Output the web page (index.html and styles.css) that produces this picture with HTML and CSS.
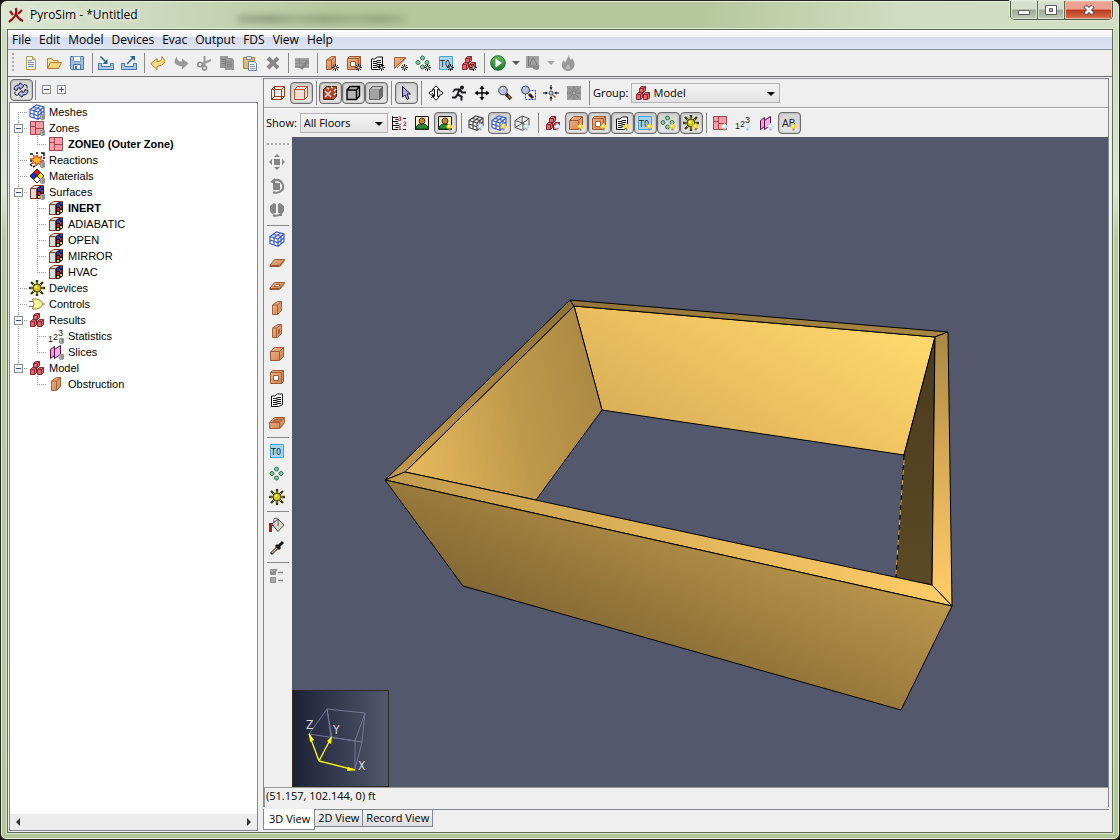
FILE: index.html
```html
<!DOCTYPE html>
<html lang="en">
<head>
<meta charset="utf-8">
<title>PyroSim - *Untitled</title>
<link rel="stylesheet" href="styles.css">
</head>
<body>
<svg class="sprite" aria-hidden="true">
  <defs>
    <linearGradient id="gOr" x1="0" y1="0" x2="1" y2="1"><stop offset="0" stop-color="#f0b68c"/><stop offset="1" stop-color="#cc7f4e"/></linearGradient>
    <linearGradient id="gGreen" x1="0" y1="0" x2="0" y2="1"><stop offset="0" stop-color="#6cba5c"/><stop offset="1" stop-color="#1d7a2c"/></linearGradient>
  </defs>
  <symbol id="lamp" viewBox="0 0 16 16"><path d="M12.500 8l3.500 3.500-1.500 2h-4l-1.500-2z" fill="#ffd23a"/><path d="M11 10h2v2h-2z" fill="#fff7b0"/><path d="M11.500 13.500h2v2h-2z" fill="#9a8a50"/></symbol>
  <symbol id="lampoff" viewBox="0 0 16 16"><path d="M12.500 8l3.500 3.500-1.500 2h-4l-1.500-2z" fill="#c4e6f2"/><path d="M11 10h2v2h-2z" fill="#fff"/><path d="M11.500 13.500h2v2h-2z" fill="#9fb4bd"/></symbol>
  <symbol id="knob" viewBox="0 0 16 16"><path d="M11 10.500q2.500-1.500 5 0v4.500q-2.500 2-5 0z" fill="#929292"/><path d="M12.500 11v4" stroke="#bbb"/></symbol>
  <symbol id="star" viewBox="0 0 16 16"><path d="M12.500 9v7M9 12.500h7M10 10l5 5M15 10l-5 5" stroke="#111" stroke-width="1"/><path d="M11.500 11.500h2v2h-2z" fill="#f4f4f4"/></symbol>

  <symbol id="new" viewBox="0 0 16 16"><path d="M3.500 1.500h6l3 3v10h-9z" fill="#fffdf0" stroke="#b39a4e"/><path d="M9.500 1.500v3h3" fill="#f1d98c" stroke="#b39a4e"/><path d="M5 5.500h4M5 7.500h6M5 9.500h6M5 11.500h6" stroke="#6d8fc0"/></symbol>
  <symbol id="open" viewBox="0 0 16 16"><path d="M1.500 13.500v-10h4l1.500 2h5v2" fill="#fde9a9" stroke="#b8792e"/><path d="M1.500 13.500l3-6h11l-3 6z" fill="#fbd57c" stroke="#b8792e"/></symbol>
  <symbol id="save" viewBox="0 0 16 16"><path d="M1.500 1.500h13v13h-12l-1-1z" fill="#9dbde0" stroke="#557aa8"/><path d="M4.500 1.500h7v5h-7z" fill="#f5f8ee" stroke="#7b98bd"/><path d="M4.500 9.500h7v5h-7z" fill="#dfeaf4" stroke="#4b6e9b"/><path d="M6 11h2v3h-2z" fill="#4b6e9b"/></symbol>
  <symbol id="import" viewBox="0 0 16 16"><path d="M.5 8.500h3v3h9v-3h3v6h-15z" fill="#a9c7e4" stroke="#4277a8"/><path d="M2.500 1.500l6 6" stroke="#20689a" stroke-width="1.500"/><path d="M9.500 4v5h-5z" fill="#20689a"/></symbol>
  <symbol id="export" viewBox="0 0 16 16"><path d="M.5 8.500h3v3h9v-3h3v6h-15z" fill="#a9c7e4" stroke="#4277a8"/><path d="M6 9l6-6" stroke="#20689a" stroke-width="1.500"/><path d="M9 1h5v5z" fill="#20689a"/></symbol>
  <symbol id="undo" viewBox="0 0 16 16"><path d="M.7 8.500L7 3.500v3q5 .5 5-5 7 8-5 10v3z" fill="#fbdc83" stroke="#bb802b"/></symbol>
  <symbol id="redo" viewBox="0 0 16 16"><path d="M15.500 8.500L9 3.500v3q-5 .5-5-5-7 8 5 10v3z" fill="#999"/></symbol>
  <symbol id="cut" viewBox="0 0 16 16"><path d="M8.500 1v7.500M15 5l-9 4M8.500 9v2" stroke="#999" stroke-width="2"/><circle cx="4" cy="9.500" r="2.200" fill="none" stroke="#888" stroke-width="1.500"/><circle cx="8.500" cy="13" r="2" fill="none" stroke="#888" stroke-width="1.500"/></symbol>
  <symbol id="copy" viewBox="0 0 16 16"><path d="M1 1h8v2h4l2 2v10H6v-2H1z" fill="#999"/><path d="M3 4.500h3M3 6.500h3M3 8.500h3M8 7.500h5M8 9.500h5M8 11.500h5M6.500 3.500v9" stroke="#808080"/></symbol>
  <symbol id="paste" viewBox="0 0 16 16"><path d="M1.500 2.500h11v11h-11z" fill="#e8b66c" stroke="#b87c34"/><path d="M4.500 1.500h5v3h-5z" fill="#dce4ec" stroke="#7f8ea0"/><path d="M6.500 6.500h6l2 2v7h-8z" fill="#f4f8fc" stroke="#6886ab"/><path d="M8 9.500h4M8 11.500h5M8 13.500h5" stroke="#7c99bd"/></symbol>
  <symbol id="del" viewBox="0 0 16 16"><path d="M3 3l10 10M13 3L3 13" stroke="#888" stroke-width="4"/></symbol>
  <symbol id="edit" viewBox="0 0 16 16"><path d="M1 3h14v10H1z" fill="#a2a2a2"/><path d="M1 5.500h14M1 8.500h14M1 11.500h14M5.500 3v10" stroke="#8b8b8b"/><path d="M7 14l7-8" stroke="#888" stroke-width="3"/></symbol>
  <symbol id="obst" viewBox="0 0 16 16"><path d="M3.500 5l5-3.500h4v9l-4 4h-5z" fill="url(#gOr)" stroke="#a5633b"/><path d="M3.500 5h5v9M8.500 5l4-3.500" fill="none" stroke="#a5633b"/></symbol>
  <symbol id="hole" viewBox="0 0 16 16"><path d="M1.500 3.500l2-2h11v11l-2 2h-11z" fill="url(#gOr)" stroke="#a05a32"/><path d="M4.500 6.500h5v5h-5z" fill="#fff" stroke="#a05a32"/><path d="M1.500 3.500h11v11M12.500 3.500l2-2" fill="none" stroke="#a05a32"/></symbol>
  <symbol id="vent" viewBox="0 0 16 16"><path d="M2.500 14.500V4h3l3-2h5v10.500l-4 2z" fill="#fff" stroke="#111"/><path d="M4 6.500h3l2-1h3M4 8.500h3l2-1h3M4 10.500h3l2-1h3M4 12.500h3l2-1h3" stroke="#111" stroke-width="1.200" fill="none"/></symbol>
  <symbol id="wedge" viewBox="0 0 16 16"><path d="M2.500 2.500h11l-11 11z" fill="url(#gOr)" stroke="#a5633b"/><path d="M5 13l9-10" stroke="#a5633b"/></symbol>
  <symbol id="parts" viewBox="0 0 16 16"><g fill="#8cc9a2" stroke="#2e7653"><circle cx="7.500" cy="3" r="2"/><circle cx="3" cy="7.500" r="2"/><circle cx="12" cy="7.500" r="2"/><circle cx="7.500" cy="12" r="2"/></g></symbol>
  <symbol id="t0" viewBox="0 0 16 16"><path d="M1.500 1.500h13v13h-13z" fill="#a5d5ee" stroke="#43a3d6"/></symbol>
  <symbol id="cubes" viewBox="0 0 16 16"><g fill="#df6a6e" stroke="#8c2430"><path d="M4.500 3.500l2-2h4v4l-2 2h-4z"/><path d="M1.500 9.500l2-2h4v5l-2 2h-4z"/><path d="M8.500 9.500l2-2h4v5l-2 2h-4z"/></g><path d="M4.500 3.500h4v4M8.500 3.500l2-2M1.500 9.500h4v5M5.500 9.500l2-2M8.500 9.500h4v5M12.500 9.500l2-2" fill="none" stroke="#8c2430"/></symbol>
  <symbol id="run" viewBox="0 0 16 16"><circle cx="8" cy="8" r="7.300" fill="url(#gGreen)" stroke="#1c6c30"/><path d="M5.500 3.500l6.500 4.500-6.500 4.500z" fill="#fff"/></symbol>
  <symbol id="plot" viewBox="0 0 16 16"><path d="M1 1h13v12H1z" fill="#a2a2a2"/><path d="M3.500 1v10h11M5 10q2-9 4-6t3 7" fill="none" stroke="#777"/><path d="M8 10h6v4l-2 1-4-1z" fill="#8b8b8b"/></symbol>
  <symbol id="flame" viewBox="0 0 16 16"><path d="M9 0q0 3 2 5l1-2q4 6 2 9-2 4-6 4t-6-4q-1-4 2-7l1 3q2-4 4-8z" fill="#999"/><path d="M8 9q3 3 2 5H6q-1-2 2-5z" fill="#b8b8b8"/></symbol>

  <symbol id="spin" viewBox="0 0 16 16"><path d="M1 7.500Q1 3 6 3L7 .8l4 3.200-4 3.500-.5-2Q4 5.500 4 8.500z" fill="#b4b8e6" stroke="#1c1c38"/><path d="M15 8.500q0 4.500-5 4.500l-1 2.200L5 12l4-3.500.5 2q2.500 0 2.500-3z" fill="#b4b8e6" stroke="#1c1c38"/><path d="M11 2.500l3 1v3M5 13.500l-3-1v-3" fill="none" stroke="#1c1c38"/></symbol>
  <symbol id="wire" viewBox="0 0 16 16"><path d="M1.500 4.500l3-3h10v10l-3 3h-10zM1.500 4.500h10v10M11.500 4.500l3-3M4.500 1.500v10h10M4.500 11.500l-3 3" fill="none" stroke="#a63a18"/></symbol>
  <symbol id="outl" viewBox="0 0 16 16"><path d="M1.500 4.500l3-3h10v10l-3 3h-10zM1.500 4.500h10v10M11.500 4.500l3-3" fill="#f3ded6" stroke="#b9512e"/></symbol>
  <symbol id="tex" viewBox="0 0 16 16"><path d="M1.500 4.500l3-3h10v10l-3 3h-10z" fill="#ad4428" stroke="#4a2318"/><path d="M3 6l6 6M9 6l-6 6M5 3l2 1M9 2l2 1M12 6l2-2M12 10l2-2" stroke="#f6d9cf" stroke-width="1.600"/></symbol>
  <symbol id="solid" viewBox="0 0 16 16"><path d="M2 5l3-3.500h9.500v9.500l-3 3.500H2zM2 5h9.500v9.500M11.500 5l3-3.500" fill="#b4b4b4" stroke="#000" stroke-width="1.400"/></symbol>
  <symbol id="shade" viewBox="0 0 16 16"><path d="M1.500 4.500l3-3h10v10l-3 3h-10z" fill="#6a6a6a" stroke="#666"/><path d="M2 5h9v9H2z" fill="#a2a2a2"/><path d="M2 4.500L5 2h9l-3 2.500z" fill="#c4c4c4"/></symbol>
  <symbol id="arrow" viewBox="0 0 16 16"><path d="M4.500 1.500v10.500l2.500-2 2 4.500 2-1-2-4.500h3.500z" fill="#a9abd8" stroke="#17172c"/></symbol>
  <symbol id="orbit" viewBox="0 0 16 16"><g fill="#fff" stroke="#111"><path d="M6.500 4.500h-2L8 .8l3.500 3.700h-2v7h2L8 15.300 4.500 11.500h2z"/><path d="M5 5.500q-4 1-4 2.500t5 3M3 13l3-2.500L4 8M11 5.500q4 1 4 2.500t-4 2.500" fill="none"/></g></symbol>
  <symbol id="walk" viewBox="0 0 16 16"><circle cx="11" cy="2.500" r="2" fill="#16161c"/><path d="M4 4.500h5l2 3h4M8.500 4.500l-2 5 4 2v4M6.500 9.500l-2 3H1" stroke="#16161c" stroke-width="2" fill="none"/><path d="M4 4L2 7" stroke="#16161c" stroke-width="1.500"/></symbol>
  <symbol id="pan" viewBox="0 0 16 16"><path d="M8 2v12M2 8h12" stroke="#000" stroke-width="1.300"/><path d="M8 .5L5.500 4h5zM8 15.500L5.500 12h5zM.5 8L4 5.500v5zM15.500 8L12 5.500v5z"/></symbol>
  <symbol id="zoom" viewBox="0 0 16 16"><path d="M9 9l5 5" stroke="#3a2013" stroke-width="3.500"/><path d="M11 10.500l3 3" stroke="#b5713a" stroke-width="1.500"/><circle cx="6" cy="5.500" r="4.300" fill="#b9bedd" stroke="#3d4055"/><path d="M4 5q0-2 2-2" stroke="#fff" fill="none"/></symbol>
  <symbol id="zoombox" viewBox="0 0 16 16"><path d="M5.500 5.500h10v9h-10z" fill="none" stroke="#222c9c" stroke-dasharray="2 1"/><path d="M9 9l4 4" stroke="#3a2013" stroke-width="3"/><circle cx="5.500" cy="5" r="4" fill="#b9bedd" stroke="#3d4055"/></symbol>
  <symbol id="fit" viewBox="0 0 16 16"><path d="M8 0v4.500M8 11.500V16M0 8h4.500M11.500 8H16" stroke="#111"/><path d="M6.500 2.500L8 4.500l1.500-2zM6.500 13.500L8 11.500l1.500 2zM2.500 6.500L4.500 8l-2 1.500zM13.500 6.500L11.500 8l2 1.500z"/><circle cx="8" cy="8" r="2" fill="#bcc6e6" stroke="#445"/><path d="M9.500 9.500l3 3" stroke="#a5632c" stroke-width="1.500"/></symbol>
  <symbol id="fitoff" viewBox="0 0 16 16"><path d="M1 1h14v14H1z" fill="#9b9b9b"/><path d="M8 1v4M8 11v4M1 8h4M11 8h4M3 3l3 3M13 3l-3 3M3 13l3-3M13 13l-3-3" stroke="#777"/><circle cx="8" cy="8" r="2" fill="#b0b0b0" stroke="#777"/></symbol>

  <symbol id="floors" viewBox="0 0 16 16"><path d="M1.500 1v14M1 2.500h6M1 6.500h6M1 10.500h7l2-2M1 14.500h6M4.500 4.500h3M4.500 8.500h3M4.500 12.500h3M12 3.500h3M12 14.500h3" stroke="#111" fill="none"/></symbol>
  <symbol id="photo" viewBox="0 0 16 16"><path d="M1.500 1.500h13v13h-13z" fill="#fdf3c2" stroke="#111"/><path d="M2 14q0-5 6-5t6 5z" fill="#2b8a36" stroke="#11401a"/><circle cx="8" cy="6" r="3" fill="#c48437" stroke="#4a2c10"/></symbol>
  <symbol id="mesh" viewBox="0 0 16 16"><path d="M1 5.500L7.500 1 15 3v7.500L9 15.300 1 12.500z" fill="#fff" fill-opacity=".6"/><path d="M1 5.500L7.500 1 15 3v7.500L9 15.300 1 12.500zM1 5.500l8 2.500 6-5M9 8v7M5 6.800v7M1 9l8 2.700 6-5M12 5.500v7M4.300 3.300l8 2.200M5 6.800l6.500-4.700" fill="none" stroke="currentColor" stroke-width="1.200"/></symbol>
  <symbol id="mesh1" viewBox="0 0 16 16"><path d="M1 5.500L8 1l7 2.500v7L9 15.300 1 12.500zM1 5.500L9 8l6-4.500M9 8v7M1 12.500L8 8.500l7 2M8 1v7.500" fill="none" stroke="#555"/></symbol>
  <symbol id="block" viewBox="0 0 16 16"><path d="M1.500 5.500l4-4h9v9l-4 4h-9z" fill="url(#gOr)" stroke="#9a5a35"/><path d="M1.500 5.500h9v9M10.500 5.500l4-4" fill="none" stroke="#9a5a35"/></symbol>
  <symbol id="sun" viewBox="0 0 16 16"><path d="M8 0v16M0 8h16M2 2l12 12M14 2L2 14" stroke="#39380c" stroke-width="2.400"/><path d="M8 2v12M2 8h12M4 4l8 8M12 4l-8 8" stroke="#b9ae1c" stroke-width="1"/><circle cx="8" cy="8" r="3.800" fill="#d8ca1e" stroke="#55500e"/><circle cx="7" cy="7" r="1.300" fill="#fff78a"/></symbol>
  <symbol id="zone" viewBox="0 0 16 16"><path d="M1.500 1.500h13v13h-13z" fill="#fb9ba5" stroke="#9c4650"/><path d="M6.500 1.500v13M1.500 6.500h5M6.500 8.500h8" stroke="#9c4650"/></symbol>
  <symbol id="slice" viewBox="0 0 16 16"><path d="M2.500 5.500l4-3v9l-4 3z" fill="#f59adf" stroke="#4c1442"/><path d="M6.500 5.500l6-4v9l-6 4z" fill="#ffa9ea" stroke="#4c1442"/></symbol>

  <symbol id="move" viewBox="0 0 16 16"><path d="M5 5h6v6H5zM8 0l3 3H5zM8 16l3-3H5zM0 8l3-3v6zM16 8l-3-3v6z" fill="#858585"/></symbol>
  <symbol id="rot" viewBox="0 0 16 16"><path d="M4 5h7v7H4z" fill="#858585"/><path d="M4 3q6-3 9 2t-1 8-8 1" fill="none" stroke="#858585" stroke-width="2"/><path d="M1 4l5-4v6z" fill="#858585"/></symbol>
  <symbol id="mirror" viewBox="0 0 16 16"><path d="M1 4l4-3 2 1v9l-4 1-2-3zM15 4l-4-3-2 1v9l4 1 2-3z" fill="#858585"/><path d="M4 13q4 2 8-1M12 11v3" stroke="#858585" fill="none" stroke-width="2"/></symbol>
  <symbol id="slab" viewBox="0 0 16 16"><path d="M.7 11.500l5-6h10l-5 6z" fill="url(#gOr)" stroke="#a05a32"/><path d="M.7 12.500h10l5-6" fill="none" stroke="#a05a32"/></symbol>
  <symbol id="slabhole" viewBox="0 0 16 16"><path d="M.7 11.500l5-6h10l-5 6z" fill="url(#gOr)" stroke="#a05a32"/><path d="M5 9.500l2-2h4.500l-2 2z" fill="#fff" stroke="#a05a32"/><path d="M.7 12.500h10l5-6" fill="none" stroke="#a05a32"/></symbol>
  <symbol id="wallhole" viewBox="0 0 16 16"><path d="M3.500 5l5-3.500h4v9l-4 4h-5z" fill="url(#gOr)" stroke="#a5633b"/><path d="M3.500 5h4v9M7.500 5l5-3.500" fill="none" stroke="#a5633b"/><path d="M9.500 7l1-1v4l-1 1z" fill="#fff" stroke="#a5633b"/></symbol>
  <symbol id="room" viewBox="0 0 16 16"><path d="M.7 7.500l5-5h10v5l-5 6h-10z" fill="url(#gOr)" stroke="#a05a32"/><path d="M.7 7.500h10l5-5M10.700 7.500v6M4.500 6l2-2h6l-2 2z" fill="#c98255" stroke="#a05a32"/></symbol>
  <symbol id="bucket" viewBox="0 0 16 16"><path d="M1.500 15V7.500h5" fill="none" stroke="#b01822" stroke-width="3"/><path d="M3 7l6-5 6 6-6 6.500z" fill="#d8d9cc" stroke="#444"/><path d="M5 6q-1-5 2-5t2 8" fill="none" stroke="#555"/></symbol>
  <symbol id="dropper" viewBox="0 0 16 16"><path d="M2 14l7-7" stroke="#333" stroke-width="3"/><path d="M3 13l6-6" stroke="#e8aaa4" stroke-width="1.300"/><path d="M7 5l4 4M10 6l4-4" stroke="#111" stroke-width="3"/></symbol>
  <symbol id="props" viewBox="0 0 16 16"><path d="M1.500 1.500h5v5h-5zM1.500 9.500h5v5h-5z" fill="#aaa" stroke="#8a8a8a"/><path d="M2 4l2 2 4-5M9 4.500h5M9 12.500h5" stroke="#888" stroke-width="1.500" fill="none"/></symbol>

  <symbol id="react" viewBox="0 0 16 16"><path d="M8 3l1.500 3L13 4l-1.500 3.500L15 9l-4 .5 1 4-3-2.500-2 3-.5-3.500L2 12l2.500-3L1 7l4-.5L4.500 3 7 5.500z" fill="#ffb92a" stroke="#d1381a"/><path d="M1 2h3M12 1h3v3M1 12l2 2M13 13h2M8 0v2M1 9h2M4 15l2-1M14 6h2" stroke="#111" stroke-width="1.500" fill="none"/></symbol>
  <symbol id="nfpa" viewBox="0 0 16 16"><path d="M8 1l3.500 3.500L8 8 4.500 4.500z" fill="#e01818"/><path d="M4.500 4.500L8 8l-3.500 3.500L1 8z" fill="#1a2fd0"/><path d="M11.500 4.500L15 8l-3.500 3.500L8 8z" fill="#ffe11a"/><path d="M8 8l3.500 3.500L8 15l-3.500-3.500z" fill="#fff"/><path d="M8 1l7 7-7 7-7-7zM4.500 4.500l7 7M11.500 4.500l-7 7" fill="none" stroke="#222"/></symbol>
  <symbol id="surf" viewBox="0 0 16 16"><path d="M1.500 4.500l4-3h9v10l-4 3h-9z" fill="#dcdcdc" stroke="#8a3620"/><path d="M8 4l3-2h4v10l-4 3H8z" fill="#15151c"/><path d="M1.500 4.500h6v10" fill="none" stroke="#8a3620"/><path d="M9 4h3v3H9zM12 2h2.500v2.500H12z" fill="#2440d8"/><path d="M12 6h2v2.500h-2zM9 8h2v3H9z" fill="#d8201c"/><path d="M9 12h2v2H9zM12 10h2v2h-2z" fill="#ffdf20"/></symbol>
  <symbol id="gate" viewBox="0 0 16 16"><path d="M0 5.500h4M0 10.500h4M13 8h3" stroke="#777"/><path d="M3.500 3h4q5 .5 6.500 5-1.500 4.500-6.500 5h-4q3-5 0-10z" fill="#fff29a" stroke="#8d8334"/></symbol>
</svg>

<div class="window">
  <header class="titlebar">
    <svg class="logo" viewBox="0 0 16 16" aria-hidden="true"><path d="M8 1q1 5-1 8t-6 6M8 7q2 5 7 7" fill="none" stroke="#8e1414" stroke-width="2.200"/><path d="M2 4l3 4M14 3l-4 4" stroke="#8e1414" stroke-width="2.200"/></svg>
    <h1>PyroSim - *Untitled</h1>
    <span class="smudge"></span>
    <div class="winbtns">
      <button aria-label="Minimize"><svg viewBox="0 0 12 12"><path d="M.5 6.500h11v4H.5z" fill="#fff" stroke="#555c66"/></svg></button>
      <button aria-label="Maximize"><svg viewBox="0 0 12 12"><path d="M.5 1.500h11v9H.5zM4.500 4.500v3h3v-3z" fill="#fff" fill-rule="evenodd" stroke="#555c66"/></svg></button>
      <button class="close" aria-label="Close"><svg viewBox="0 0 12 12"><path d="M2 2l8 8M10 2l-8 8" stroke="#5a4850" stroke-width="4.500"/><path d="M2.500 2.500l7 7M9.500 2.500l-7 7" stroke="#fff" stroke-width="2.500"/></svg></button>
    </div>
  </header>
  <main class="client">
    <nav class="menubar">
      <button>File</button><button>Edit</button><button>Model</button><button>Devices</button><button>Evac</button><button>Output</button><button>FDS</button><button>View</button><button>Help</button>
    </nav>
    <div class="toolbar main-tools" role="toolbar" aria-label="Main">
      <span class="grip"></span>
      <button class="tb" aria-label="New"><svg><use href="#new"/></svg></button>
      <button class="tb" aria-label="Open"><svg><use href="#open"/></svg></button>
      <button class="tb" aria-label="Save"><svg><use href="#save"/></svg></button>
      <i class="sep wide"></i>
      <button class="tb" aria-label="Import"><svg><use href="#import"/></svg></button>
      <button class="tb" aria-label="Export"><svg><use href="#export"/></svg></button>
      <i class="sep wide"></i>
      <button class="tb" aria-label="Undo"><svg><use href="#undo"/></svg></button>
      <button class="tb" aria-label="Redo"><svg><use href="#redo"/></svg></button>
      <button class="tb" aria-label="Cut"><svg><use href="#cut"/></svg></button>
      <button class="tb" aria-label="Copy"><svg><use href="#copy"/></svg></button>
      <button class="tb" aria-label="Paste"><svg><use href="#paste"/></svg></button>
      <button class="tb" aria-label="Delete"><svg><use href="#del"/></svg></button>
      <i class="sep wide"></i>
      <button class="tb" aria-label="Edit properties"><svg><use href="#edit"/></svg></button>
      <i class="sep wide"></i>
      <button class="tb" aria-label="New obstruction"><svg><use href="#obst"/><use href="#star"/></svg></button>
      <button class="tb" aria-label="New hole"><svg><use href="#hole"/><use href="#star"/></svg></button>
      <button class="tb" aria-label="New vent"><svg><use href="#vent"/><use href="#star"/></svg></button>
      <button class="tb" aria-label="New slope"><svg><use href="#wedge"/><use href="#star"/></svg></button>
      <button class="tb" aria-label="New particles"><svg><use href="#parts"/><use href="#star"/></svg></button>
      <button class="tb" aria-label="New init region"><svg><use href="#t0"/><text class="mono" x="2" y="12">T0</text><use href="#star"/></svg></button>
      <button class="tb" aria-label="New group"><svg><use href="#cubes"/><use href="#star"/></svg></button>
      <i class="sep wide"></i>
      <button class="tb" aria-label="Run FDS"><svg><use href="#run"/></svg></button>
      <button class="drop" aria-label="Run options"></button>
      <button class="tb" aria-label="Plot"><svg><use href="#plot"/></svg></button>
      <button class="drop off" aria-label="Plot options"></button>
      <button class="tb" aria-label="Smokeview"><svg><use href="#flame"/></svg></button>
    </div>

    <div class="body">
      <aside class="side">
        <div class="side-tools">
          <button class="tb on" aria-label="Sync selection"><svg><use href="#spin"/></svg></button>
          <i class="sep"></i>
          <button class="expander" aria-label="Collapse all"></button>
          <button class="expander plus" aria-label="Expand all"></button>
        </div>
        <div class="tree-pane">
          <ul class="tree">
            <li><div class="row"><span class="twig"></span><svg class="blue"><use href="#mesh"/><use href="#knob"/></svg><span>Meshes</span></div></li>
            <li><div class="row"><span class="twig"><button class="expander" aria-label="Collapse Zones"></button></span><svg><use href="#zone"/><use href="#knob"/></svg><span>Zones</span></div>
              <ul><li><div class="row"><span class="twig"></span><svg><use href="#zone"/></svg><b>ZONE0 (Outer Zone)</b></div></li></ul></li>
            <li><div class="row"><span class="twig"></span><svg><use href="#react"/><use href="#knob"/></svg><span>Reactions</span></div></li>
            <li><div class="row"><span class="twig"></span><svg><use href="#nfpa"/><use href="#knob"/></svg><span>Materials</span></div></li>
            <li><div class="row"><span class="twig"><button class="expander" aria-label="Collapse Surfaces"></button></span><svg><use href="#surf"/><use href="#knob"/></svg><span>Surfaces</span></div>
              <ul>
                <li><div class="row"><span class="twig"></span><svg><use href="#surf"/></svg><b>INERT</b></div></li>
                <li><div class="row"><span class="twig"></span><svg><use href="#surf"/></svg><span>ADIABATIC</span></div></li>
                <li><div class="row"><span class="twig"></span><svg><use href="#surf"/></svg><span>OPEN</span></div></li>
                <li><div class="row"><span class="twig"></span><svg><use href="#surf"/></svg><span>MIRROR</span></div></li>
                <li><div class="row"><span class="twig"></span><svg><use href="#surf"/></svg><span>HVAC</span></div></li>
              </ul></li>
            <li><div class="row"><span class="twig"></span><svg><use href="#sun"/></svg><span>Devices</span></div></li>
            <li><div class="row"><span class="twig"></span><svg><use href="#gate"/></svg><span>Controls</span></div></li>
            <li><div class="row"><span class="twig"><button class="expander" aria-label="Collapse Results"></button></span><svg><use href="#cubes"/></svg><span>Results</span></div>
              <ul>
                <li><div class="row"><span class="twig"></span><svg class="digits"><text x="0" y="14">1</text><text x="5" y="12">2</text><text x="10" y="8">3</text><use href="#knob"/></svg><span>Statistics</span></div></li>
                <li><div class="row"><span class="twig"></span><svg><use href="#slice"/><use href="#knob"/></svg><span>Slices</span></div></li>
              </ul></li>
            <li><div class="row"><span class="twig"><button class="expander" aria-label="Collapse Model"></button></span><svg><use href="#cubes"/></svg><span>Model</span></div>
              <ul><li><div class="row"><span class="twig"></span><svg><use href="#obst"/></svg><span>Obstruction</span></div></li></ul></li>
          </ul>
          <div class="hscroll"><button class="left" aria-label="Scroll left"></button><button class="right" aria-label="Scroll right"></button></div>
        </div>
      </aside>

      <section class="view">
        <div class="view-box">
          <div class="toolbar nav-tools" role="toolbar" aria-label="Navigation">
            <button class="tb" aria-label="Wireframe"><svg><use href="#wire"/></svg></button>
            <button class="tb on" aria-label="Outlines"><svg><use href="#outl"/></svg></button>
            <i class="sep wide"></i>
            <button class="tb on" aria-label="Textures"><svg><use href="#tex"/></svg></button>
            <button class="tb on" aria-label="Solid"><svg><use href="#solid"/></svg></button>
            <button class="tb on" aria-label="Shading"><svg><use href="#shade"/></svg></button>
            <i class="sep roomy"></i>
            <button class="tb on" aria-label="Select"><svg><use href="#arrow"/></svg></button>
            <i class="sep roomy"></i>
            <button class="tb" aria-label="Orbit"><svg><use href="#orbit"/></svg></button>
            <button class="tb" aria-label="Roam"><svg><use href="#walk"/></svg></button>
            <button class="tb" aria-label="Pan"><svg><use href="#pan"/></svg></button>
            <button class="tb" aria-label="Zoom"><svg><use href="#zoom"/></svg></button>
            <button class="tb" aria-label="Zoom box"><svg><use href="#zoombox"/></svg></button>
            <button class="tb" aria-label="Reset view"><svg><use href="#fit"/></svg></button>
            <button class="tb" aria-label="Reset to selection"><svg><use href="#fitoff"/></svg></button>
            <i class="sep roomy"></i>
            <label for="group">Group:</label>
            <span class="combo group"><svg><use href="#cubes"/></svg><select id="group"><option>Model</option></select></span>
          </div>
          <div class="toolbar show-tools" role="toolbar" aria-label="Show">
            <label for="floor">Show:</label>
            <span class="combo floor"><select id="floor"><option>All Floors</option></select></span>
            <button class="tb" aria-label="Floors"><svg class="storeys"><use href="#floors"/><text x="7" y="6">3</text><text x="12" y="11">2</text><text x="7" y="15">1</text></svg></button>
            <button class="tb" aria-label="Background image"><svg><use href="#photo"/></svg></button>
            <button class="tb on" aria-label="Show background"><svg><use href="#photo"/><use href="#lamp"/></svg></button>
            <i class="sep broad"></i>
            <button class="tb" aria-label="Mesh divisions"><svg><use href="#mesh"/><use href="#lampoff"/></svg></button>
            <button class="tb on blue" aria-label="Mesh grid"><svg><use href="#mesh"/><use href="#lamp"/></svg></button>
            <button class="tb" aria-label="Mesh outline"><svg><use href="#mesh1"/><use href="#lampoff"/></svg></button>
            <i class="sep broad"></i>
            <button class="tb" aria-label="Groups"><svg><use href="#cubes"/><use href="#lampoff"/></svg></button>
            <button class="tb on" aria-label="Obstructions"><svg><use href="#block"/><use href="#lamp"/></svg></button>
            <button class="tb on" aria-label="Holes"><svg><use href="#hole"/><use href="#lamp"/></svg></button>
            <button class="tb on" aria-label="Vents"><svg><use href="#vent"/><use href="#lamp"/></svg></button>
            <button class="tb on" aria-label="Init regions"><svg><use href="#t0"/><text class="mono" x="2" y="12">T0</text><use href="#lamp"/></svg></button>
            <button class="tb on" aria-label="Particles"><svg><use href="#parts"/><use href="#lamp"/></svg></button>
            <button class="tb on" aria-label="Devices"><svg><use href="#sun"/><use href="#lamp"/></svg></button>
            <i class="sep wide"></i>
            <button class="tb" aria-label="Zones"><svg><use href="#zone"/><use href="#lampoff"/></svg></button>
            <button class="tb" aria-label="Statistics"><svg class="digits"><text x="0" y="14">1</text><text x="5" y="12">2</text><text x="10" y="8">3</text><use href="#lampoff"/></svg></button>
            <button class="tb" aria-label="Slices"><svg><use href="#slice"/><use href="#lampoff"/></svg></button>
            <button class="tb on" aria-label="Labels"><svg class="letters"><text x="1" y="12">AB</text><use href="#lamp"/></svg></button>
          </div>
          <div class="stage">
            <div class="vtools" role="toolbar" aria-label="Drawing" aria-orientation="vertical">
              <span class="grip flat"></span>
              <div class="loose">
                <button class="tb" aria-label="Move"><svg><use href="#move"/></svg></button>
                <button class="tb" aria-label="Rotate"><svg><use href="#rot"/></svg></button>
                <button class="tb" aria-label="Mirror"><svg><use href="#mirror"/></svg></button>
              </div>
              <i class="rule"></i>
              <button class="tb blue" aria-label="Mesh"><svg><use href="#mesh"/></svg></button>
              <button class="tb" aria-label="Slab"><svg><use href="#slab"/></svg></button>
              <button class="tb" aria-label="Slab hole"><svg><use href="#slabhole"/></svg></button>
              <button class="tb" aria-label="Wall"><svg><use href="#obst"/></svg></button>
              <button class="tb" aria-label="Wall hole"><svg><use href="#wallhole"/></svg></button>
              <button class="tb" aria-label="Block"><svg><use href="#block"/></svg></button>
              <button class="tb" aria-label="Block hole"><svg><use href="#hole"/></svg></button>
              <button class="tb" aria-label="Vent"><svg><use href="#vent"/></svg></button>
              <button class="tb" aria-label="Room"><svg><use href="#room"/></svg></button>
              <i class="rule"></i>
              <button class="tb" aria-label="Init region"><svg><use href="#t0"/><text class="mono" x="2" y="12">T0</text></svg></button>
              <button class="tb" aria-label="Particle cloud"><svg><use href="#parts"/></svg></button>
              <button class="tb" aria-label="Device"><svg><use href="#sun"/></svg></button>
              <i class="rule"></i>
              <button class="tb" aria-label="Paint"><svg><use href="#bucket"/></svg></button>
              <button class="tb" aria-label="Pick color"><svg><use href="#dropper"/></svg></button>
              <i class="rule"></i>
              <button class="tb" aria-label="Tool properties"><svg><use href="#props"/></svg></button>
            </div>
            <div class="canvas">
              <svg class="scene" viewBox="292 137 816 650" role="img" aria-label="Room model">
                <defs>
                  <linearGradient id="back" gradientUnits="userSpaceOnUse" x1="602" y1="405" x2="713" y2="216"><stop offset="0" stop-color="#dab059"/><stop offset=".4" stop-color="#edc060"/><stop offset="1" stop-color="#ffd86c"/></linearGradient>
                  <linearGradient id="left" gradientUnits="userSpaceOnUse" x1="410" y1="470" x2="600" y2="430"><stop offset="0" stop-color="#e8b95d"/><stop offset=".6" stop-color="#bf994b"/><stop offset="1" stop-color="#ae8b44"/></linearGradient>
                  <linearGradient id="front" gradientUnits="userSpaceOnUse" x1="600" y1="647" x2="675" y2="481"><stop offset="0" stop-color="#836934"/><stop offset=".4" stop-color="#9c7c3d"/><stop offset="1" stop-color="#bb964b"/></linearGradient>
                  <linearGradient id="rimF" gradientUnits="userSpaceOnUse" x1="385" y1="480" x2="950" y2="600"><stop offset="0" stop-color="#c19a4d"/><stop offset="1" stop-color="#ffcd67"/></linearGradient>
                  <linearGradient id="rimR" gradientUnits="userSpaceOnUse" x1="940" y1="332" x2="940" y2="600"><stop offset="0" stop-color="#ab8943"/><stop offset=".6" stop-color="#e3b35b"/><stop offset="1" stop-color="#ffcc67"/></linearGradient>
                  <linearGradient id="rimL" gradientUnits="userSpaceOnUse" x1="390" y1="478" x2="570" y2="302"><stop offset="0" stop-color="#c39a4d"/><stop offset="1" stop-color="#8d7138"/></linearGradient>
                  <linearGradient id="rimB" gradientUnits="userSpaceOnUse" x1="570" y1="302" x2="948" y2="334"><stop offset="0" stop-color="#92763a"/><stop offset="1" stop-color="#a98742"/></linearGradient>
                  <linearGradient id="dark" gradientUnits="userSpaceOnUse" x1="920" y1="340" x2="920" y2="585"><stop offset="0" stop-color="#4b3b1f"/><stop offset="1" stop-color="#5b4a25"/></linearGradient>
                </defs>
                <g stroke="#000" stroke-width="1" stroke-linejoin="round">
                  <path d="M574 306L935 337 904 455 602 410z" fill="url(#back)"/>
                  <path d="M574 306L602 410 536 500 405 472z" fill="url(#left)"/>
                  <path d="M935 337L904 455 896 578 932 585z" fill="url(#dark)"/>
                  <path d="M904 460L896 574" stroke="#e8bc60" stroke-dasharray="5 5"/>
                  <path d="M385 480L570 300 574 306 405 472z" fill="url(#rimL)"/>
                  <path d="M570 300L948 332 935 337 574 306z" fill="url(#rimB)"/>
                  <path d="M948 332L952 606 932 585 935 337z" fill="url(#rimR)"/>
                  <path d="M385 480L405 472 932 585 952 606z" fill="url(#rimF)"/>
                  <path d="M385 480L952 606 901 710 463 586z" fill="url(#front)"/>
                </g>
              </svg>
              <svg class="axes" viewBox="0 0 95 95" role="img" aria-label="Axis indicator">
                <path d="M34 18L72 22 69 51 62 78 62 50 72 22M34 18L16 43 62 50 69 51 38 46zM34 18L39 47" fill="none" stroke="#737792"/>
                <path d="M26 70L16 43M26 70L38 47M26 70L62 79" stroke="#ff0" stroke-width="1.300"/>
                <path d="M16 42l5 7-4 2zM39 45l-1 8-4-3zM63 79l-9 1 1-4z" fill="#ff0"/>
                <g fill="#d4d6dc" font-family="DejaVu Sans Condensed, sans-serif" font-size="12"><text x="13" y="38">Z</text><text x="40" y="43">Y</text><text x="65" y="79">X</text></g>
              </svg>
            </div>
          </div>
          <div class="status">(51.157, 102.144, 0) ft</div>
        </div>
        <div class="tabs" role="tablist">
          <button role="tab" aria-selected="true">3D View</button><button role="tab" aria-selected="false">2D View</button><button role="tab" aria-selected="false">Record View</button>
        </div>
      </section>
    </div>
  </main>
</div>
</body>
</html>
```
FILE: styles.css
```css
* { box-sizing: border-box; }

body {
  margin: 0;
  height: 100vh;
  background: #14180f;
  color: #000;
  font: 12px/16px "Open Sans", "Noto Sans", sans-serif;
}

button, select { font: inherit; color: inherit; }
button { margin: 0; padding: 0; border: 0; background: none; }
.sprite { position: absolute; width: 0; height: 0; }

/* Window frame */
.window {
  display: flex;
  flex-direction: column;
  height: 100vh;
  padding: 0 6px 6px;
  border: 1px solid #23261f;
  border-radius: 7px 7px 6px 6px;
  background:
    linear-gradient(90deg, #dce6d2 0, #c9d7b9 180px, transparent 330px) top / 100% 28px no-repeat,
    linear-gradient(90deg, #b5c89d 700px, #cfdcbf 900px, #d3dfc5) top / 100% 28px no-repeat,
    linear-gradient(180deg, #c9d8bb 0, #dbe6d4 190px, #b6ca9c 240px, #b3c898 100%);
  box-shadow: inset 0 0 0 1px #e6eedd;
}
.titlebar { display: flex; align-items: center; height: 28px; flex: none; }
.logo { width: 16px; height: 16px; margin: 0 6px 0 1px; }
.titlebar h1 {
  margin: 0;
  font-size: 12px;
  font-weight: 400;
  line-height: 16px;
  text-shadow: 0 0 6px #fff, 0 0 10px #fff;
}
.smudge {
  width: 168px;
  height: 8px;
  margin: 8px 0 0 100px;
  background: linear-gradient(90deg, #66755a, #4c5a40 20%, #7d8f6b 35%, #5b6a4e 50%, #7d8f6b 70%, #5b6a4e 85%, #8fa27b);
  opacity: .4;
  filter: blur(3px);
}
.winbtns {
  display: flex;
  align-self: flex-start;
  height: 19px;
  margin-left: auto;
  border: 1px solid #4d5745;
  border-top: 0;
  border-radius: 0 0 5px 5px;
  overflow: hidden;
  box-shadow: 0 0 0 1px #e3ebda;
}
.winbtns button {
  display: grid;
  place-items: center;
  width: 27px;
  border-right: 1px solid #5f6b55;
  background: linear-gradient(#d6dfcc 0 45%, #9ca88f 50%, #c2ceb5);
  box-shadow: inset 0 0 0 1px #dce5d2;
}
.winbtns svg { width: 12px; height: 12px; }
.winbtns .close {
  width: 47px;
  border-right: 0;
  background: linear-gradient(#eca391 0 45%, #bb3a1f 50%, #d9704f);
  box-shadow: inset 0 0 0 1px #efb7a5;
}

.client {
  display: flex;
  flex-direction: column;
  flex: 1;
  min-height: 0;
  border: 1px solid #5f6a55;
  box-shadow: 0 0 0 1px #dfe9d5;
  background: #efefef;
}

/* Menu */
.menubar {
  display: flex;
  gap: 8px;
  height: 20px;
  flex: none;
  padding-left: 4px;
  border-bottom: 1px solid #8d909a;
  background: linear-gradient(#fff 0, #eef1f8 35%, #d5dbec 40%, #dfe5f4 100%);
}

/* Toolbars */
.toolbar { display: flex; align-items: center; flex: none; }
.main-tools { height: 27px; padding-left: 4px; border-bottom: 1px solid #6d6d6d; }
.grip {
  width: 2px;
  height: 20px;
  margin-right: 6px;
  background: repeating-linear-gradient(#aaa 0 2px, transparent 2px 4px);
}
.tb {
  display: grid;
  place-items: start;
  width: 23px;
  height: 22px;
  flex: none;
  padding: 2px;
  border: 1px solid transparent;
  color: #4a4a4a;
}
.tb svg { width: 16px; height: 16px; }
.tb.on {
  border-color: #6b6b6b;
  border-radius: 4px;
  background: linear-gradient(#d2d2d2, #e6e6e6);
  box-shadow: inset 0 0 2px #888;
}
.tb.blue, .blue { color: #3d5fc4; }
.sep { width: 1px; height: 20px; flex: none; margin: 0 2px; background: #8a8a8a; }
.sep.wide { margin: 0 2px 0 3px; }
.sep.roomy { margin: 0 3px; }
.sep.broad { margin: 0 3px 0 4px; }
.drop { width: 12px; height: 22px; display: grid; place-items: center; }
.drop::before { content: ""; border: 4px solid transparent; border-top-color: #555; border-bottom: 0; }
.drop.off::before { border-top-color: #a8a8a8; }

/* Lettering inside icons */
.mono { font: 9px "DejaVu Sans Condensed", sans-serif; fill: #222; }
.digits text { font: 9px "Liberation Sans", sans-serif; fill: #222; }
.letters text { font: 10px "Liberation Sans", sans-serif; fill: #222; }
.storeys text { font: bold 6px "DejaVu Sans Condensed", sans-serif; fill: #c52412; }

.body { display: flex; flex: 1; min-height: 0; gap: 5px; padding: 0 3px 1px 1px; }

/* Side panel */
.side { display: flex; flex-direction: column; width: 249px; flex: none; }
.side-tools { display: flex; align-items: center; height: 25px; flex: none; padding-left: 1px; }
.side-tools .expander { margin-left: 4px; }
.side-tools .plus { margin-left: 6px; }
.expander {
  display: block;
  width: 9px;
  height: 9px;
  border: 1px solid #8b8f96;
  background: linear-gradient(#2f4b8c, #2f4b8c) center / 5px 1px no-repeat, #f7f7f7;
}
.expander.plus {
  background:
    linear-gradient(#2f4b8c, #2f4b8c) center / 5px 1px no-repeat,
    linear-gradient(#2f4b8c, #2f4b8c) center / 1px 5px no-repeat,
    #f7f7f7;
}
.tree-pane {
  display: flex;
  flex-direction: column;
  justify-content: space-between;
  flex: 1;
  min-height: 0;
  border: 1px solid #828790;
  background: #fff;
}
.tree, .tree ul { margin: 0; padding: 0; list-style: none; }
.tree { padding-top: 1px; font: 11px/16px "Liberation Sans", Arial, sans-serif; }
.tree ul { margin-left: 19px; }
.tree li { background: repeating-linear-gradient(#999 0 1px, transparent 1px 2px) 8px 0 / 1px 100% no-repeat; }
.tree > li:first-child { background-position: 8px 8px; }
.tree li:last-child { background-size: 1px 8px; }
.row { display: flex; align-items: center; height: 16px; }
.row svg { width: 16px; height: 16px; margin-right: 4px; }
.twig {
  display: flex;
  align-items: center;
  width: 19px;
  height: 16px;
  padding-left: 4px;
  flex: none;
  background: repeating-linear-gradient(90deg, #999 0 1px, transparent 1px 2px) 8px 8px / 10px 1px no-repeat;
}
.hscroll { display: flex; justify-content: space-between; height: 16px; padding: 0 6px; background: #ececec; }
.hscroll button { border: 4px solid transparent; align-self: center; }
.hscroll .left { border-right-color: #333; border-left: 0; }
.hscroll .right { border-left-color: #333; border-right: 0; }

/* View */
.view { display: flex; flex-direction: column; flex: 1; min-width: 0; padding-top: 1px; }
.view-box {
  display: flex;
  flex-direction: column;
  flex: 1;
  min-height: 0;
  border: 1px solid #828790;
  border-bottom: 0;
}
.nav-tools { height: 29px; padding-left: 3px; border-bottom: 1px solid #a0a0a0; }
.nav-tools .sep { height: 24px; }
.show-tools { height: 29px; padding-left: 2px; border-top: 1px solid #fff; }
.nav-tools label, .show-tools label { font-size: 11px; }
.combo { position: relative; height: 20px; flex: none; }
.combo select {
  width: 100%;
  height: 20px;
  padding: 0 20px 0 3px;
  border: 1px solid #b4b4b4;
  border-radius: 0;
  background: linear-gradient(#f4f4f4, #e2e2e2);
  font-size: 11px;
  appearance: none;
}
.combo::after {
  content: "";
  position: absolute;
  right: 5px;
  top: 9px;
  border: 4px solid transparent;
  border-top-color: #000;
  border-bottom: 0;
  pointer-events: none;
}
.combo svg { position: absolute; left: 4px; top: 2px; width: 16px; height: 16px; }
.group { width: 149px; margin-left: 3px; }
.group select { padding-left: 21px; }
.floor { width: 88px; margin-left: 3px; }

.stage { display: flex; flex: 1; min-height: 0; }
.vtools {
  display: flex;
  flex-direction: column;
  align-items: center;
  width: 28px;
  flex: none;
  padding: 6px 2px 0 1px;
}
.vtools .tb { height: 23px; width: 24px; }
.grip.flat {
  width: 22px;
  height: 2px;
  margin: 0 0 6px;
  background: repeating-linear-gradient(90deg, #aaa 0 2px, transparent 2px 4px);
}
.vtools .loose .tb { height: 24px; }
.rule { width: 22px; height: 1px; flex: none; margin: 2px 0; background: #8a8a8a; }
.canvas { position: relative; flex: 1; min-width: 0; background: #54586c; }
.scene { display: block; width: 100%; height: 100%; }
.axes {
  position: absolute;
  left: 0;
  bottom: 0;
  width: 97px;
  height: 97px;
  border: 1px solid #2d2a1c;
  background: linear-gradient(90deg, #1b2137, #53576b);
}
.status {
  height: 20px;
  flex: none;
  padding-left: 1px;
  border: 1px solid #9a9a9a;
  border-width: 1px 0 0 1px;
  font-size: 11px;
  line-height: 16px;
}

/* Tabs */
.tabs {
  display: flex;
  align-items: flex-start;
  height: 24px;
  flex: none;
  background: linear-gradient(#828790, #828790) 0 2px / 100% 1px no-repeat;
}
.tabs button {
  height: 18px;
  margin-top: 2px;
  padding: 0 3px;
  border: 1px solid #828790;
  border-left-width: 0;
  background: linear-gradient(#f4f4f4, #dedede);
  font-size: 11px;
  line-height: 16px;
  white-space: nowrap;
}
.tabs [aria-selected="true"] {
  height: 21px;
  padding: 0 4px 0 5px;
  border-left-width: 1px;
  border-top: 0;
  background: #fff;
  line-height: 20px;
}
```
